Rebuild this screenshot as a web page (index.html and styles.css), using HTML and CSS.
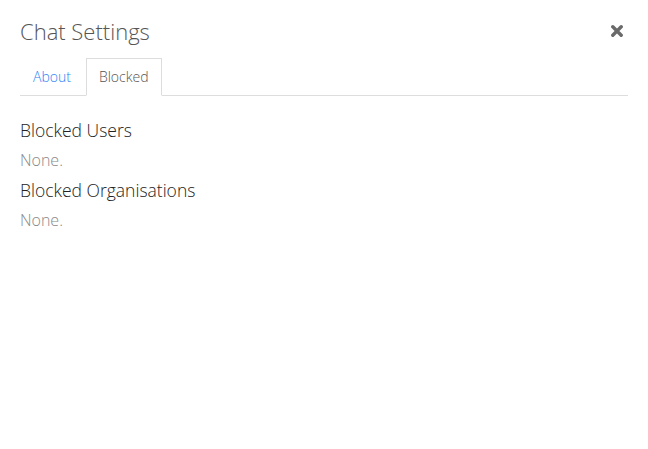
FILE: index.html
```html
<!DOCTYPE html>
<html>
<head>
<meta charset="utf-8">
<link rel="stylesheet" href="styles.css">
</head>
<body>
<div class="modal">
  <div class="header">
    <h1 class="title">Chat Settings</h1>
    <button class="close" aria-label="Close">
      <svg width="12" height="12" viewBox="0 0 12 12"><path d="M1.8 1.8 L10.2 10.2 M10.2 1.8 L1.8 10.2" stroke="#6a6a6a" stroke-width="3.4" stroke-linecap="round"/></svg>
    </button>
  </div>
  <ul class="tabs">
    <li class="tab"><a href="#">About</a></li>
    <li class="tab active"><a href="#">Blocked</a></li>
  </ul>
  <div class="content">
    <h2 class="heading">Blocked Users</h2>
    <p class="empty">None.</p>
    <h2 class="heading">Blocked Organisations</h2>
    <p class="empty">None.</p>
  </div>
</div>
</body>
</html>
```
FILE: styles.css
```css
html, body { margin: 0; padding: 0; background: #fff; }
body { font-family: "Open Sans", sans-serif; font-weight: 300; }
.modal { padding: 15px 20px 20px 20px; }
.header { display: flex; justify-content: space-between; align-items: flex-start; }
.title { margin: 0; font-size: 22px; font-weight: 300; color: #555; line-height: 32px; }
.close { border: 0; background: none; padding: 0; margin: 10px 5px 0 0; display: flex; cursor: pointer; }
.tabs { list-style: none; margin: 11px 0 0 0; padding: 0; display: flex; border-bottom: 1px solid #ddd; }
.tab { margin: 0 2px -1px 0; }
.tab a { display: block; padding: 8px 12px; font-size: 14px; line-height: 20px; color: #2a7ff7; text-decoration: none; border: 1px solid transparent; border-bottom: 0; }
.tab.active a { color: #555; border-color: #ddd; border-bottom: 1px solid #fff; }
.content { padding-top: 22px; }
.heading { margin: 0 0 8px 0; font-size: 17.5px; font-weight: 300; color: #222; line-height: 24px; }
.empty { margin: 0 0 8px 0; font-size: 16px; color: #888; line-height: 20px; }
```
